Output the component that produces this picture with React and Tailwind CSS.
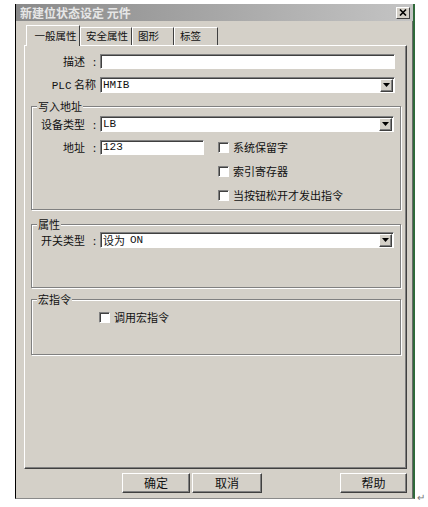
const cjk = "font-['Noto_Sans_CJK_SC',sans-serif]";
const mono = "font-['Liberation_Mono','Noto_Sans_CJK_SC',monospace]";

function Field({ className = "", children }) {
  return (
    <div
      className={`flex items-center border border-t-[#808080] border-l-[#808080] border-b-white border-r-white bg-white pl-[2px] shadow-[inset_1px_1px_0_#404040] ${className}`}
    >
      {children}
    </div>
  );
}

function DropBtn() {
  return (
    <div className="ml-auto mr-[1px] flex h-[13px] w-[13px] items-center justify-center border border-t-white border-l-white border-b-[#404040] border-r-[#404040] bg-[#d4d0c8] shadow-[inset_-1px_-1px_0_#808080]">
      <svg width="7" height="4" viewBox="0 0 7 4">
        <path d="M0 0h7L3.5 4z" fill="#000" />
      </svg>
    </div>
  );
}

function Select({ children, className = "" }) {
  return (
    <Field className={`h-[16px] ${className}`}>
      <span className={`${mono} text-[11px] leading-none`}>{children}</span>
      <DropBtn />
    </Field>
  );
}

function Label({ text, width }) {
  return (
    <div className={`flex shrink-0 justify-end whitespace-nowrap leading-[15px] ${width}`}>
      <span>{text}</span>
      <span className="w-[11px] text-right">:</span>
    </div>
  );
}

function Check({ label }) {
  return (
    <div className="flex h-[16px] items-center gap-[4px] whitespace-nowrap">
      <span className="h-[11px] w-[11px] border border-t-[#808080] border-l-[#808080] border-b-white border-r-white bg-white shadow-[inset_1px_1px_0_#404040]" />
      <span>{label}</span>
    </div>
  );
}

function Group({ title, className = "", children }) {
  return (
    <div
      className={`ml-[6px] mr-[5px] border border-[#808080] shadow-[inset_1px_1px_0_white,1px_1px_0_white] ${className}`}
    >
      <div className="-mt-[8px] ml-[5px] w-fit bg-[#d4d0c8] px-[1px] leading-[14px]">{title}</div>
      {children}
    </div>
  );
}

function Btn({ children, className = "" }) {
  return (
    <div
      className={`flex h-[20px] items-center justify-center border border-t-white border-l-white border-b-[#404040] border-r-[#404040] shadow-[inset_-1px_-1px_0_#808080] text-[12px] ${className}`}
    >
      {children}
    </div>
  );
}

function Tab({ children, active, className = "" }) {
  return (
    <div
      className={`flex items-start whitespace-nowrap border-t border-l border-r border-t-white border-l-white border-r-[#404040] pl-[5px] ${
        active ? "relative z-10 -mb-px h-[21px] justify-center bg-[#d4d0c8] pl-0 pt-[2px]" : "mt-[2px] h-[18px]"
      } ${className}`}
    >
      {children}
    </div>
  );
}

export default function App() {
  return (
    <div className={`${cjk} h-[507px] w-[428px] bg-white text-[11px] text-[#111]`}>
      <div className="flex items-end">
        <div className="ml-[15px] mt-[4px] flex h-[495px] w-[400px] flex-col border-l border-r-2 border-b border-l-black border-r-[#2f6a3a] border-b-[#8a8a8a] bg-[#d4d0c8] shadow-[inset_-1px_0_0_#6a6a6a]">
          {/* title bar */}
          <div className="flex h-[17px] items-center bg-gradient-to-r from-[#8a8a8a] to-[#c4c4c4] pl-[4px]">
            <span className="text-[12px] font-bold text-[#e6e6e6]">新建位状态设定 元件</span>
            <div className="ml-auto mr-[3px] flex h-[12px] w-[14px] items-center justify-center border border-t-white border-l-white border-b-[#404040] border-r-[#404040] bg-[#d4d0c8]">
              <svg width="8" height="7" viewBox="0 0 8 7">
                <path d="M1 0.5L7 6.5M7 0.5L1 6.5" stroke="#000" strokeWidth="1.6" />
              </svg>
            </div>
          </div>

          {/* tabs */}
          <div className="ml-[10px] mt-[4px] flex h-[20px] items-start text-[10.5px]">
            <Tab active className="w-[54px]">一般属性</Tab>
            <Tab className="w-[52px]">安全属性</Tab>
            <Tab className="w-[42px]">图形</Tab>
            <Tab className="w-[44px]">标签</Tab>
          </div>

          {/* panel */}
          <div className="ml-[8px] flex h-[424px] w-[383px] flex-col border border-t-white border-l-white border-b-[#404040] border-r-[#404040] pt-[8px] shadow-[inset_-1px_-1px_0_#808080]">
            <div className="flex items-center">
              <Label text="描述" width="w-[71px]" />
              <Field className="ml-[4px] mr-[11px] h-[15px] flex-1" />
            </div>
            <div className="mt-[7px] flex items-center">
              <div className="w-[71px] shrink-0 whitespace-nowrap text-right leading-[16px]">
                <span className={`${mono} text-[11px]`}>PLC</span> 名称
              </div>
              <Select className="ml-[4px] mr-[11px] flex-1">HMIB</Select>
            </div>

            <Group title="写入地址" className="mt-[12px] h-[104px]">
              <div className="mt-[3px] flex items-center">
                <Label text="设备类型" width="w-[64px]" />
                <Select className="ml-[4px] mr-[6px] flex-1">LB</Select>
              </div>
              <div className="mt-[8px] flex items-start">
                <Label text="地址" width="w-[64px]" />
                <Field className="ml-[4px] h-[15px] w-[104px]">
                  <span className={`${mono} text-[11px] leading-none`}>123</span>
                </Field>
                <div className="ml-[14px] -mt-px flex flex-col gap-[8px]">
                  <Check label="系统保留字" />
                  <Check label="索引寄存器" />
                  <Check label="当按钮松开才发出指令" />
                </div>
              </div>
            </Group>

            <Group title="属性" className="mt-[14px] h-[64px]">
              <div className="mt-[1px] flex items-center">
                <Label text="开关类型" width="w-[64px]" />
                <Field className="ml-[4px] mr-[6px] h-[16px] flex-1">
                  <span className="leading-none">设为</span>
                  <span className={`${mono} ml-[5px] text-[11px] leading-none`}>ON</span>
                  <DropBtn />
                </Field>
              </div>
            </Group>

            <Group title="宏指令" className="mt-[11px] h-[56px]">
              <div className="ml-[67px] mt-[3px]">
                <Check label="调用宏指令" />
              </div>
            </Group>
          </div>

          {/* buttons */}
          <div className="mt-[4px] flex">
            <Btn className="ml-[106px] w-[68px]">确定</Btn>
            <Btn className="ml-[2px] w-[70px]">取消</Btn>
            <Btn className="ml-[78px] w-[67px]">帮助</Btn>
          </div>
        </div>
        <span className="-mb-[3px] ml-[2px] text-[10px] leading-none text-[#777]">↵</span>
      </div>
    </div>
  );
}
